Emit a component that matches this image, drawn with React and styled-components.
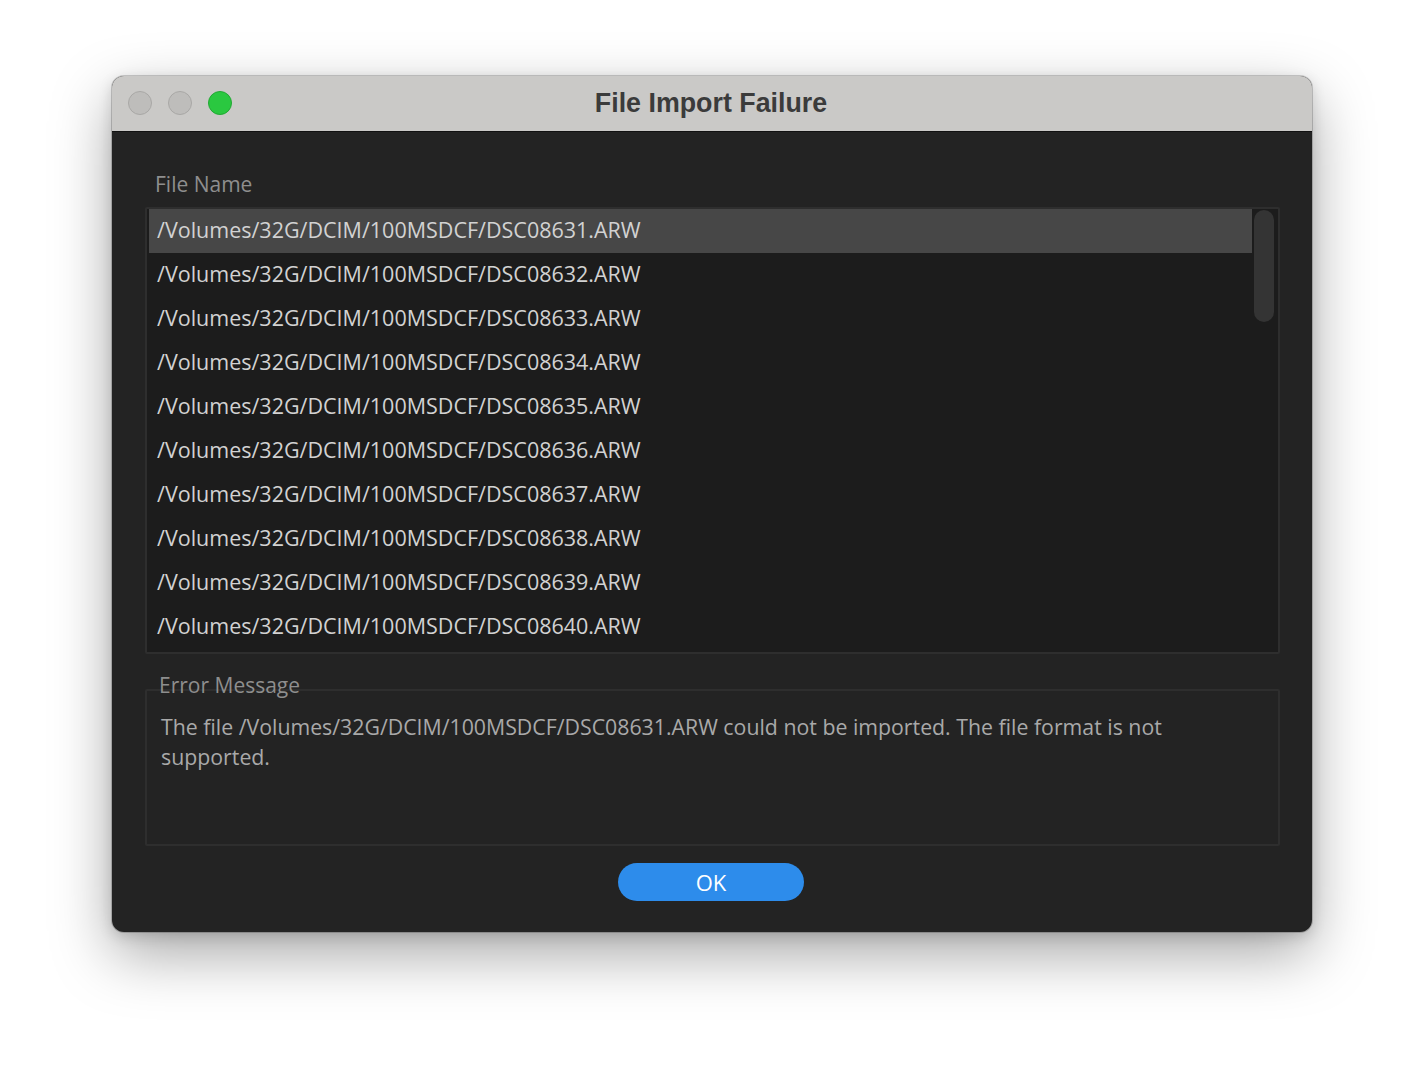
import React from 'react'
import styled, { createGlobalStyle } from 'styled-components'

const GlobalStyle = createGlobalStyle`
  html, body {
    margin: 0;
    padding: 0;
    background: #ffffff;
  }
  body {
    font-family: "Open Sans", "Noto Sans", sans-serif;
  }
`

const files = Array.from({ length: 40 }, (_, i) => `/Volumes/32G/DCIM/100MSDCF/DSC0${8631 + i}.ARW`)

export default function App() {
  return (
    <>
      <GlobalStyle />
      <Page>
        <Window>
          <TitleBar>
            <Lights>
              <Light />
              <Light />
              <Light $color="#2ac840" $border="#22a834" />
            </Lights>
            <Title>File Import Failure</Title>
          </TitleBar>
          <Body>
            <SectionLabel>File Name</SectionLabel>
            <ListBox>
              <Rows>
                {files.map((f, i) => (
                  <Row key={f} $selected={i === 0}>{f}</Row>
                ))}
              </Rows>
              <ScrollTrack>
                <ScrollThumb />
              </ScrollTrack>
            </ListBox>
            <ErrorLabel>Error Message</ErrorLabel>
            <MessageBox>
              The file /Volumes/32G/DCIM/100MSDCF/DSC08631.ARW could not be imported. The file format is not supported.
            </MessageBox>
            <Footer>
              <OkButton>OK</OkButton>
            </Footer>
          </Body>
        </Window>
      </Page>
    </>
  )
}

const Page = styled.div`
  padding: 76px 112px 100px;
  display: flex;
`

const Window = styled.div`
  width: 1200px;
  border-radius: 12px;
  overflow: hidden;
  background: #232323;
  box-shadow: 0 0 0 1px rgba(0, 0, 0, 0.18), 0 22px 60px rgba(0, 0, 0, 0.35), 0 4px 14px rgba(0, 0, 0, 0.15);
`

const TitleBar = styled.div`
  position: relative;
  height: 55px;
  background: #cac9c7;
  border-bottom: 1px solid #111111;
  display: flex;
  align-items: center;
  justify-content: center;
`

const Lights = styled.div`
  position: absolute;
  left: 16px;
  top: 15px;
  display: flex;
  gap: 16px;
`

const Light = styled.span`
  width: 22px;
  height: 22px;
  border-radius: 50%;
  background: ${p => p.$color || '#bebdbb'};
  border: 1px solid ${p => p.$border || '#a9a8a6'};
`

const Title = styled.div`
  font-family: "Liberation Sans", Arial, sans-serif;
  font-weight: 700;
  font-size: 26.8px;
  color: #3b3b3b;
  margin-right: 2px;
`

const Body = styled.div`
  padding: 38px 32px 31px 33px;
  display: flex;
  flex-direction: column;
`

const SectionLabel = styled.div`
  font-size: 21px;
  line-height: 28px;
  color: #8e8e8e;
  padding-left: 10px;
  margin-bottom: 9px;
`

const ListBox = styled.div`
  height: 443px;
  border: 2px solid #2e2e2e;
  border-radius: 2px;
  background: #1c1c1c;
  padding-left: 2px;
  display: flex;
  overflow: hidden;
`

const Rows = styled.div`
  flex: 1;
  overflow: hidden;
`

const Row = styled.div`
  height: 44px;
  display: flex;
  align-items: center;
  padding: 0 0 3px 8px;
  box-sizing: border-box;
  font-size: 21.5px;
  color: #d2d2d2;
  white-space: nowrap;
  background: ${p => (p.$selected ? '#474747' : 'transparent')};
`

const ScrollTrack = styled.div`
  width: 26px;
  padding: 1px 4px 0 2px;
  box-sizing: border-box;
`

const ScrollThumb = styled.div`
  height: 112px;
  border-radius: 10px;
  background: #343434;
`

const ErrorLabel = styled.div`
  position: relative;
  z-index: 1;
  font-size: 21px;
  line-height: 28px;
  color: #8e8e8e;
  padding-left: 14px;
  margin-top: 17px;
  margin-bottom: -10px;
`

const MessageBox = styled.div`
  height: 132px;
  border: 2px solid #2e2e2e;
  border-radius: 2px;
  padding: 21px 30px 0 14px;
  font-size: 21.3px;
  line-height: 30px;
  color: #a9a9a9;
`

const Footer = styled.div`
  display: flex;
  justify-content: center;
  margin-top: 17px;
  padding-right: 3px;
`

const OkButton = styled.button`
  width: 186px;
  height: 38px;
  border: none;
  border-radius: 19px;
  background: #2d8ceb;
  color: #ffffff;
  font-family: "Open Sans", "Noto Sans", sans-serif;
  font-size: 22px;
  padding: 0;
  cursor: pointer;
`
